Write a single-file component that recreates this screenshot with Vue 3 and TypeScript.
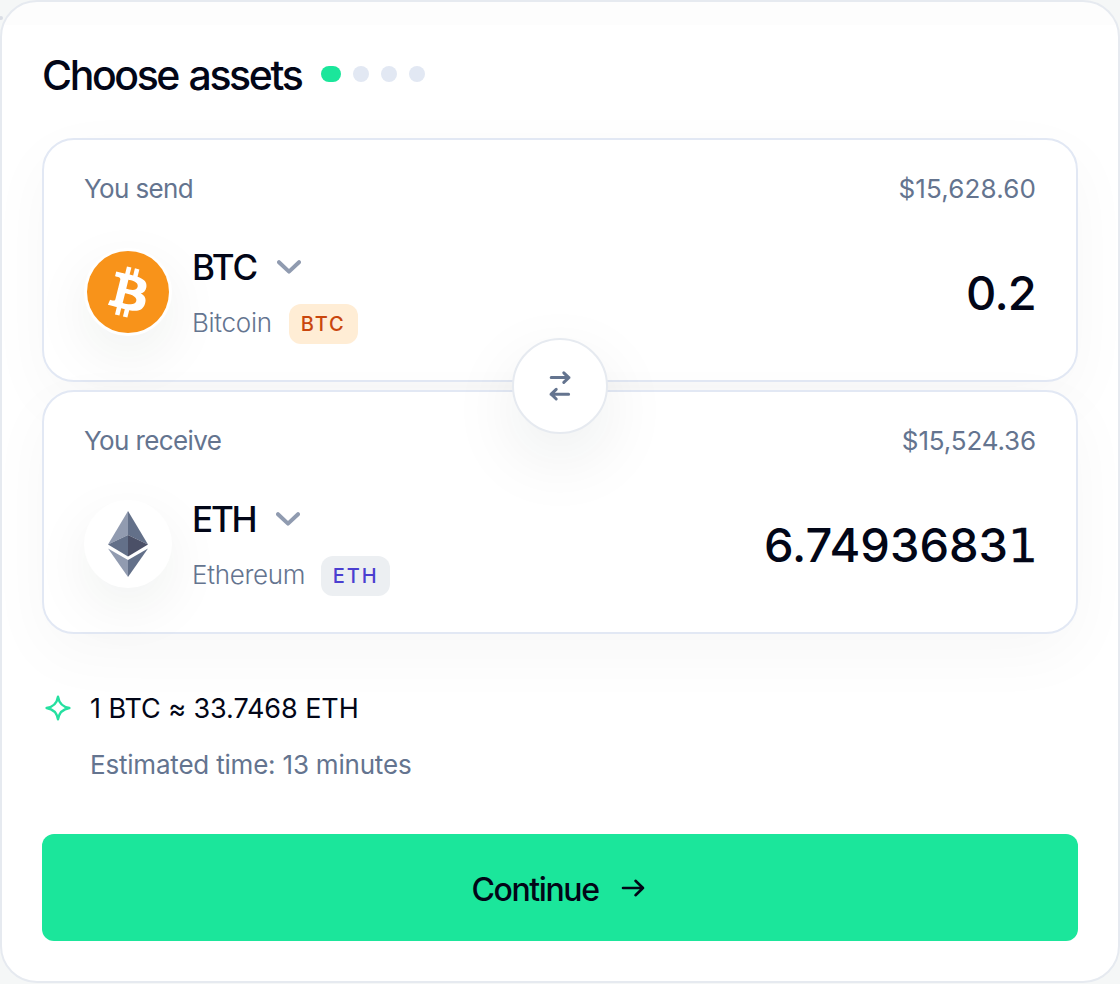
<script setup lang="ts">
interface Asset {
  id: 'btc' | 'eth'
  label: string
  fiat: string
  symbol: string
  name: string
}

const assets: Asset[] = [
  { id: 'btc', label: 'You send', fiat: '$15,628.60', symbol: 'BTC', name: 'Bitcoin' },
  { id: 'eth', label: 'You receive', fiat: '$15,524.36', symbol: 'ETH', name: 'Ethereum' },
]
</script>

<template>
  <main class="page">
    <span class="speck"></span>
    <section class="card">
      <header class="header">
        <h1 class="title">Choose assets</h1>
        <div class="steps">
          <span class="step active"></span>
          <span v-for="n in 3" :key="n" class="step"></span>
        </div>
      </header>

      <div class="panels">
        <article v-for="a in assets" :key="a.id" class="panel" :class="a.id">
          <div class="row top">
            <span class="label">{{ a.label }}</span>
            <span class="fiat">{{ a.fiat }}</span>
          </div>
          <div class="row main">
            <div class="coin">
              <svg v-if="a.id === 'btc'" viewBox="0 0 32 32" width="82" height="82">
                <circle cx="16" cy="16" r="16" fill="#f8931a" />
                <path fill="#fff" d="M23.189 14.02c.314-2.096-1.283-3.223-3.465-3.975l.708-2.84-1.728-.43-.69 2.765c-.454-.114-.92-.22-1.385-.326l.695-2.783L15.596 6l-.708 2.839c-.376-.086-.746-.17-1.104-.26l.002-.009-2.384-.595-.46 1.846s1.283.294 1.256.312c.7.175.826.638.805 1.006l-.806 3.235c.048.012.11.03.18.057l-.183-.045-1.13 4.532c-.086.212-.303.531-.793.41.018.025-1.256-.313-1.256-.313l-.858 1.978 2.25.561c.418.105.828.215 1.231.318l-.715 2.872 1.727.43.708-2.84c.472.127.93.245 1.378.357l-.706 2.828 1.728.43.715-2.866c2.948.558 5.164.333 6.097-2.333.752-2.146-.037-3.385-1.588-4.192 1.13-.26 1.98-1.003 2.207-2.538zm-3.95 5.538c-.533 2.147-4.148.986-5.32.695l.95-3.805c1.172.293 4.929.872 4.37 3.11zm.535-5.569c-.487 1.953-3.495.96-4.47.717l.86-3.45c.975.243 4.118.696 3.61 2.733z" />
              </svg>
              <svg v-else viewBox="0 0 40 66" width="42" height="66">
                <path d="M20 0 0 33.5 20 24z" fill="#919bb0" />
                <path d="M20 0 40 33.5 20 24z" fill="#637089" />
                <path d="M20 24 0 33.5 20 45.5z" fill="#637089" />
                <path d="M20 24 40 33.5 20 45.5z" fill="#4b5067" />
                <path d="M0 37.5 20 49v17z" fill="#919bb0" />
                <path d="M40 37.5 20 49v17z" fill="#637089" />
              </svg>
            </div>
            <div class="info">
              <div class="symbol-line">
                <span class="symbol">{{ a.symbol }}</span>
                <svg class="chevron" viewBox="0 0 24 14" width="24" height="14">
                  <path d="M2 2.2 12 11.6 22 2.2" />
                </svg>
              </div>
              <div class="name-line">
                <span class="name">{{ a.name }}</span>
                <span class="tag">{{ a.symbol }}</span>
              </div>
            </div>
            <div v-if="a.id === 'btc'" class="amount">0.2</div>
            <div v-else class="amount">6.7493683<span class="one">1</span></div>
          </div>
        </article>
        <button class="swap" type="button" aria-label="Swap assets">
          <svg viewBox="0 0 24 32" width="24" height="32">
            <path d="M3.2 7.6H21M15.8 2.8l5 4.8-5 4.8M20.6 24.2H3M8.2 19.4l-5 4.8 5 4.8" />
          </svg>
        </button>
      </div>

      <div class="quote">
        <svg viewBox="0 0 26 26" width="26" height="26">
          <path d="M13 1.6C14.1 8.6 17.4 11.9 24.4 13 17.4 14.1 14.1 17.4 13 24.4 11.9 17.4 8.6 14.1 1.6 13 8.6 11.9 11.9 8.6 13 1.6z" />
        </svg>
        <div class="quote-text">
          <div class="rate">1 BTC ≈ 33.7468 ETH</div>
          <div class="estimate">Estimated time: 13 minutes</div>
        </div>
      </div>

      <button class="continue" type="button">
        <span>Continue</span>
        <svg viewBox="0 0 24 20" width="24" height="20">
          <path d="M2 10h20M14.5 2.8 22 10l-7.5 7.2" />
        </svg>
      </button>
    </section>
  </main>
</template>

<style>
body {
  background: #f5f7f7;
}
</style>

<style scoped>
.page {
  position: relative;
  height: 984px;
  overflow: hidden;
  font-family: Inter, 'Liberation Sans', sans-serif;
  color: #020617;
}
.speck {
  position: absolute;
  top: 16px;
  left: -1px;
  width: 4px;
  height: 4px;
  border-radius: 2px;
  background: #d9dde5;
}
.card {
  box-sizing: border-box;
  height: 983px;
  padding: 49px 40px 0;
  border: 2px solid #e6eaf0;
  border-radius: 37px;
  background: linear-gradient(#fdfdfd 23px, #fff 23px);
}
.header {
  display: flex;
  align-items: center;
  gap: 20px;
  height: 48px;
}
.title {
  margin: 0;
  font-size: 41px;
  font-weight: 500;
  line-height: 50px;
  letter-spacing: -2.4px;
  word-spacing: 2px;
  white-space: nowrap;
}
.steps {
  display: flex;
  gap: 12px;
  margin-top: -2px;
}
.step {
  width: 16px;
  height: 16px;
  border-radius: 8px;
  background: #e2e8f3;
}
.step.active {
  width: 20px;
  background: #1be69b;
}
.panels {
  position: relative;
  display: flex;
  flex-direction: column;
  gap: 8px;
  margin-top: 39px;
}
.panel {
  box-sizing: border-box;
  height: 244px;
  padding: 28px 40px 0;
  border: 2px solid #e2e8f4;
  border-radius: 32px;
  background: #fff;
  box-shadow: 0 20px 64px rgba(10, 40, 35, 0.036);
}
.row {
  display: flex;
  align-items: center;
}
.top {
  justify-content: space-between;
  height: 40px;
  color: #64748f;
  font-size: 26px;
}
.label {
  letter-spacing: -0.62px;
}
.btc .fiat {
  letter-spacing: 0.15px;
}
.eth .fiat {
  letter-spacing: -0.15px;
}
.main {
  height: 88px;
  margin-top: 40px;
}
.coin {
  display: flex;
  align-items: center;
  justify-content: center;
  width: 88px;
  height: 88px;
  border-radius: 50%;
  background: #fff;
  box-shadow: 0 20px 60px rgba(10, 40, 35, 0.065);
}
.info {
  margin-left: 20px;
}
.symbol-line {
  display: flex;
  align-items: center;
  height: 48px;
  gap: 20px;
}
.symbol {
  font-size: 35px;
  font-weight: 500;
  line-height: 46px;
  height: 48px;
  letter-spacing: -1.2px;
}
.eth .symbol {
  letter-spacing: -2.2px;
  margin-right: 1px;
}
.chevron {
  margin-top: -2px;
}
.chevron path {
  fill: none;
  stroke: #909bb0;
  stroke-width: 4;
  stroke-linecap: round;
  stroke-linejoin: round;
}
.name-line {
  display: flex;
  align-items: center;
  height: 40px;
  margin-top: 12px;
  margin-bottom: -4px;
  gap: 17px;
}
.name {
  margin-top: -3px;
  color: #64748f;
  font-size: 26px;
  font-weight: 300;
  letter-spacing: -0.3px;
}
.eth .name {
  margin-right: -1px;
}
.tag {
  box-sizing: border-box;
  width: 69px;
  height: 40px;
  border-radius: 12px;
  font-size: 20px;
  font-weight: 500;
  line-height: 40px;
  letter-spacing: 2px;
  text-align: center;
  background: #ffedd5;
  color: #c9460d;
}
.eth .tag {
  background: #eceff2;
  color: #4b3fd0;
}
.amount {
  margin-left: auto;
  padding-top: 2px;
  font-size: 47px;
  font-weight: 500;
  line-height: 60px;
}
.btc .amount {
  letter-spacing: -0.8px;
}
.one {
  margin-right: -2px;
  font-family: 'DejaVu Sans', sans-serif;
  font-weight: 400;
  -webkit-text-stroke: 0.3px #020617;
}
.swap {
  position: absolute;
  top: 200px;
  left: 470px;
  display: flex;
  align-items: center;
  justify-content: center;
  width: 96px;
  height: 96px;
  padding: 0;
  border: 2px solid #e6eaf0;
  border-radius: 50%;
  background: #fff;
  box-shadow: 0 24px 70px rgba(10, 40, 35, 0.08);
}
.swap path {
  fill: none;
  stroke: #64748f;
  stroke-width: 3;
  stroke-linecap: round;
  stroke-linejoin: round;
}
.quote {
  display: flex;
  gap: 19px;
  margin-top: 56px;
  padding-left: 3px;
}
.quote > svg {
  margin-top: 5px;
}
.quote > svg path {
  fill: none;
  stroke: #25e0a0;
  stroke-width: 2.4;
  stroke-linejoin: round;
}
.rate {
  height: 36px;
  font-size: 27px;
  line-height: 38px;
  letter-spacing: -0.08px;
}
.estimate {
  height: 36px;
  margin-top: 21px;
  color: #64748f;
  font-size: 26px;
  line-height: 36px;
  letter-spacing: -0.2px;
}
.continue {
  display: flex;
  align-items: center;
  justify-content: center;
  gap: 22px;
  width: 100%;
  height: 107px;
  margin-top: 51px;
  padding: 0 4px 0 0;
  border: 0;
  border-radius: 12px;
  background: #1be69b;
  color: #020617;
  font-family: inherit;
  font-size: 32px;
  font-weight: 500;
  letter-spacing: -1.4px;
}
.continue span {
  padding-top: 3px;
}
.continue path {
  fill: none;
  stroke: #020617;
  stroke-width: 2.6;
  stroke-linecap: round;
  stroke-linejoin: round;
}
</style>
